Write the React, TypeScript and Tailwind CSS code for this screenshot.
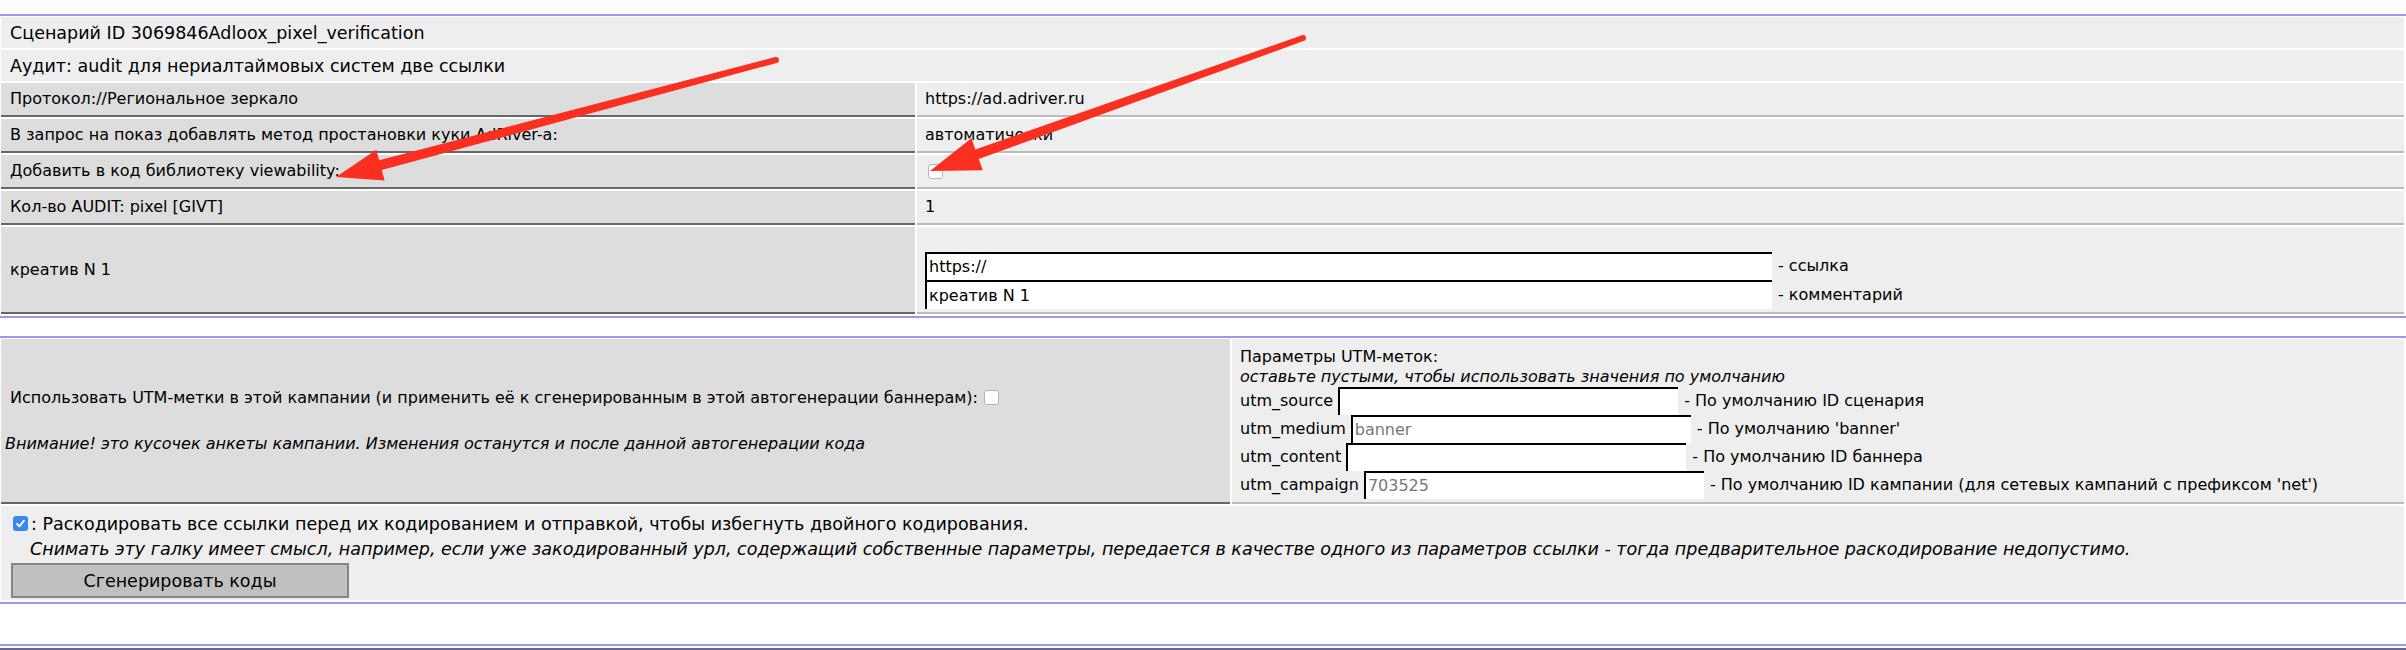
import React from "react";

type Pt = { x: number; y: number };

function arrowPoints(t: Pt, p: Pt, headLen: number, headHalf: number, w0: number, w1: number) {
  const dx = p.x - t.x;
  const dy = p.y - t.y;
  const L = Math.sqrt(dx * dx + dy * dy);
  const ux = dx / L;
  const uy = dy / L;
  const nx = -uy;
  const ny = ux;
  const bx = p.x - ux * headLen;
  const by = p.y - uy * headLen;
  const pts: [number, number][] = [
    [t.x + nx * w0, t.y + ny * w0],
    [bx + nx * w1, by + ny * w1],
    [bx + nx * headHalf, by + ny * headHalf],
    [p.x, p.y],
    [bx - nx * headHalf, by - ny * headHalf],
    [bx - nx * w1, by - ny * w1],
    [t.x - nx * w0, t.y - ny * w0],
  ];
  return pts.map((q) => `${q[0].toFixed(1)},${q[1].toFixed(1)}`).join(" ");
}

function Arrows() {
  const a1 = { t: { x: 776, y: 60 }, p: { x: 336, y: 177 } };
  const a2 = { t: { x: 1303, y: 38 }, p: { x: 930, y: 171 } };
  return (
    <svg className="absolute left-0 top-0 pointer-events-none" width={2406} height={650}>
      <polygon points={arrowPoints(a1.t, a1.p, 46, 16, 3, 5)} fill="#fb2f1f" />
      <circle cx={a1.t.x} cy={a1.t.y} r={3} fill="#fb2f1f" />
      <polygon points={arrowPoints(a2.t, a2.p, 50, 17, 3, 5)} fill="#fb2f1f" />
      <circle cx={a2.t.x} cy={a2.t.y} r={3} fill="#fb2f1f" />
    </svg>
  );
}

function Row({ label, children }: { label: React.ReactNode; children?: React.ReactNode }) {
  return (
    <div className="flex gap-[2px] h-[34px]">
      <div className="w-[914px] shrink-0 bg-[#dddddd] border-b-2 border-[#666666] flex items-center pl-[9px] whitespace-nowrap">
        {label}
      </div>
      <div className="flex-1 bg-[#eeeeee] border-b-2 border-[#bbbbbb] flex items-center pl-[8px] whitespace-nowrap">
        {children}
      </div>
    </div>
  );
}

function EmptyBox({ className = "" }: { className?: string }) {
  return (
    <span
      className={
        "inline-block w-[15px] h-[15px] bg-white border border-[#b5b5b5] rounded-[3px] align-middle " + className
      }
    />
  );
}

function CheckedBox() {
  return (
    <span className="inline-flex items-center justify-center w-[15px] h-[15px] bg-[#3a87f0] rounded-[3px] align-middle">
      <svg width="11" height="11" viewBox="0 0 11 11">
        <path d="M2 5.8 L4.4 8.4 L9 2.6" stroke="white" strokeWidth="1.8" fill="none" strokeLinecap="round" strokeLinejoin="round" />
      </svg>
    </span>
  );
}

function TextInput({ value, width, gray = false, h = 28 }: { value: string; width: number; gray?: boolean; h?: number }) {
  return (
    <span
      className={
        "inline-flex items-center bg-white border-t-2 border-l-2 border-black pl-[2px] shrink-0 " +
        (gray ? "text-[#777777]" : "text-black")
      }
      style={{ width, height: h }}
    >
      {value}
    </span>
  );
}

function UtmLine({ label, value, desc }: { label: string; value: string; desc: string }) {
  return (
    <div className="flex items-center h-[28px] whitespace-nowrap">
      <span>{label}</span>
      <span className="w-[5px] shrink-0" />
      <TextInput value={value} width={340} gray h={28} />
      <span className="ml-[6px]">{desc}</span>
    </div>
  );
}

export default function App() {
  return (
    <div className="relative w-[2406px] h-[650px] overflow-hidden bg-white text-black text-[16px] leading-[20px] font-['DejaVu_Sans',sans-serif]">
      <div className="h-[14px]" />

      {/* Section 1 */}
      <div className="border-y-2 border-[#9999ee] pt-[1px] pb-[2px] pl-[1px] pr-[2px] flex flex-col gap-[2px]">
        <div className="h-[31px] bg-[#eeeeee] flex items-center pl-[9px] text-[17.5px]">Сценарий ID 3069846Adloox_pixel_verification</div>
        <div className="h-[31px] bg-[#eeeeee] flex items-center pl-[9px] text-[17.5px]">Аудит: audit для нериалтаймовых систем две ссылки</div>
        <Row label="Протокол://Региональное зеркало">https://ad.adriver.ru</Row>
        <Row label="В запрос на показ добавлять метод простановки куки AdRiver-a:">автоматически</Row>
        <Row label="Добавить в код библиотеку viewability:">
          <EmptyBox className="ml-[3px]" />
        </Row>
        <Row label="Кол-во AUDIT: pixel [GIVT]">1</Row>
        <div className="flex gap-[2px] h-[87px]">
          <div className="w-[914px] shrink-0 bg-[#dddddd] border-b-2 border-[#666666] flex items-center pl-[9px]">
            креатив N 1
          </div>
          <div className="flex-1 bg-[#eeeeee] border-b-2 border-[#bbbbbb] pl-[8px] pt-[25px] flex flex-col">
            <div className="flex items-center whitespace-nowrap">
              <TextInput value="https://" width={847} h={28} />
              <span className="ml-[6px]">- ссылка</span>
            </div>
            <div className="flex items-center whitespace-nowrap">
              <TextInput value="креатив N 1" width={847} h={29} />
              <span className="ml-[6px]">- комментарий</span>
            </div>
          </div>
        </div>
      </div>

      <div className="h-[18px]" />

      {/* Section 2 */}
      <div className="border-y-2 border-[#9999ee] pt-[1px] pb-[2px] pl-[1px] pr-[2px] flex flex-col gap-[2px]">
        <div className="flex gap-[2px] h-[165px]">
          <div className="w-[1229px] shrink-0 bg-[#dddddd] border-b-2 border-[#666666] flex flex-col justify-center pl-[4px] leading-[23px] whitespace-nowrap">
            <div className="flex items-center">
              <span>&nbsp;Использовать UTM-метки в этой кампании (и применить её к сгенерированным в этой автогенерации баннерам):</span>
              <EmptyBox className="ml-[6px]" />
            </div>
            <div className="h-[23px]" />
            <div className="italic">Внимание! это кусочек анкеты кампании. Изменения останутся и после данной автогенерации кода</div>
          </div>
          <div className="flex-1 bg-[#eeeeee] border-b-2 border-[#bbbbbb] pl-[8px] pt-[8px] flex flex-col whitespace-nowrap">
            <div className="h-[20px]">Параметры UTM-меток:</div>
            <div className="h-[20px] italic">оставьте пустыми, чтобы использовать значения по умолчанию</div>
            <UtmLine label="utm_source" value="" desc="- По умолчанию ID сценария" />
            <UtmLine label="utm_medium" value="banner" desc="- По умолчанию 'banner'" />
            <UtmLine label="utm_content" value="" desc="- По умолчанию ID баннера" />
            <UtmLine label="utm_campaign" value="703525" desc="- По умолчанию ID кампании (для сетевых кампаний с префиксом 'net')" />
          </div>
        </div>
        <div className="h-[94px] bg-[#eeeeee] pt-[5px] flex flex-col whitespace-nowrap text-[17.5px]">
          <div className="flex items-center h-[25px] pl-[12px]">
            <CheckedBox />
            <span className="ml-[3px]">: Раскодировать все ссылки перед их кодированием и отправкой, чтобы избегнуть двойного кодирования.</span>
          </div>
          <div className="h-[25px] flex items-center pl-[29px] italic">
            Снимать эту галку имеет смысл, например, если уже закодированный урл, содержащий собственные параметры, передается в качестве одного из параметров ссылки - тогда предварительное раскодирование недопустимо.
          </div>
          <div className="pl-[10px] mt-[2px]">
            <button className="w-[338px] h-[35px] bg-[#c0c0c0] border-2 border-[#858585] flex items-center justify-center text-[17.5px] text-black">
              Сгенерировать коды
            </button>
          </div>
        </div>
      </div>

      <div className="h-[40px]" />
      <div className="border-t-2 border-[#9999ee] pt-[2px]">
        <div className="h-[10px] bg-[#66668f]" />
      </div>

      <Arrows />
    </div>
  );
}
